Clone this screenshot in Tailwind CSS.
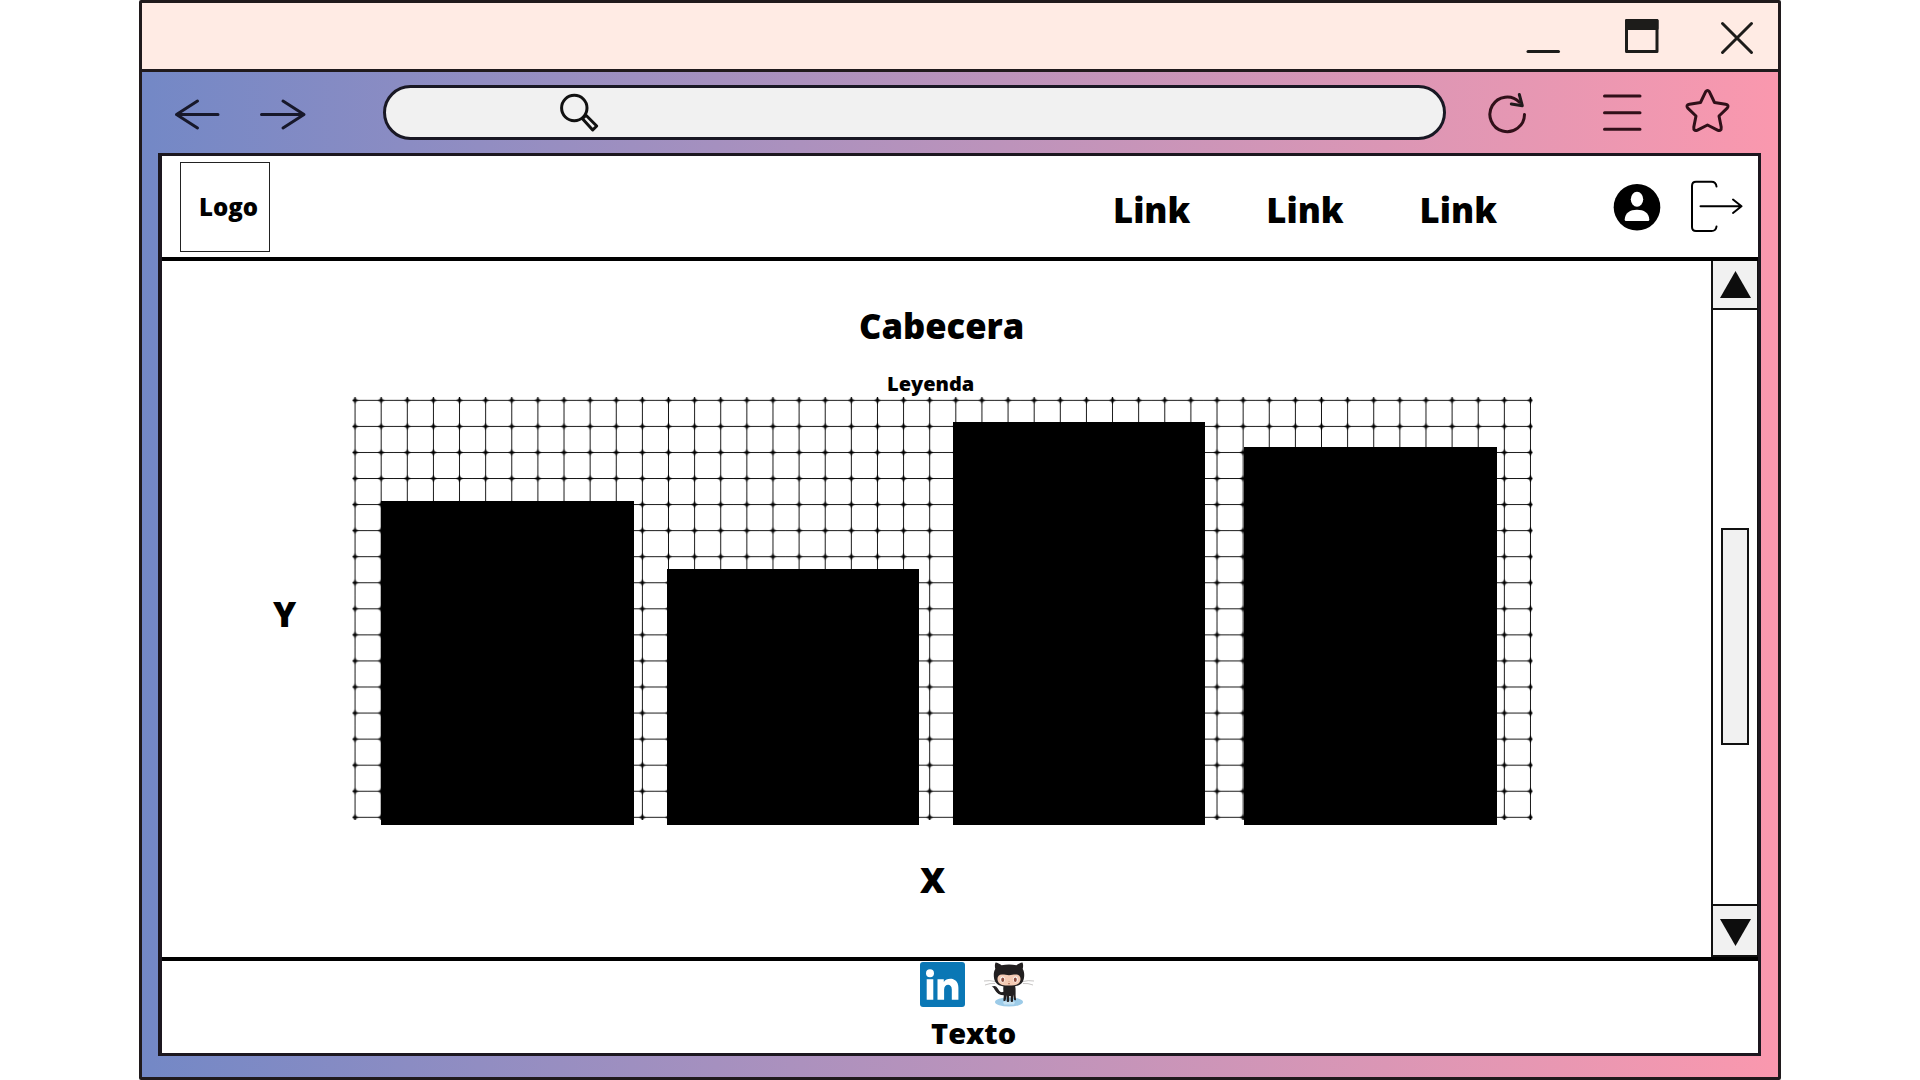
<!DOCTYPE html>
<html lang="es">
<head>
<meta charset="utf-8">
<title>Cabecera</title>
<script src="https://cdn.jsdelivr.net/npm/@tailwindcss/browser@4"></script>
</head>
<body class="bg-white w-[1920px] h-[1080px] overflow-hidden font-['Open_Sans',sans-serif] font-extrabold text-black">
<div class="ml-[139px] w-[1642px] h-[1080px] border-3 border-[#201a1c] rounded-[2px] flex flex-col bg-linear-to-r from-[#7388c6] to-[#fa98ae]">
  <!-- title bar -->
  <div class="h-[69px] shrink-0 bg-[#ffebe4] border-b-3 border-[#201a1c] flex justify-end">
    <svg class="w-[278px] h-[66px]" viewBox="1500 3 278 66" fill="none" stroke="#1d1c1a" stroke-width="3" stroke-linecap="round" stroke-linejoin="round">
      <path d="M1528 51.5h30.5"/>
      <path d="M1626.500 20.500h30.500v31h-30.500z"/>
      <path d="M1626.500 20.500h30.500v8h-30.500z" fill="#1d1c1a"/>
      <path d="M1722.500 23.500l29 29M1751.500 23.500l-29 29"/>
    </svg>
  </div>
  <!-- toolbar -->
  <div class="h-[81px] shrink-0 flex items-start">
    <svg class="w-[241px] h-[81px] shrink-0" viewBox="142 72 241 81" fill="none" stroke="#17182a" stroke-width="3" stroke-linecap="round" stroke-linejoin="round">
      <path d="M218 114.500h-41.500M197.500 101l-21 13.500l21 13.500"/>
      <path d="M261.500 114.500h42M283 101l21 13.500l-21 13.500"/>
    </svg>
    <div class="mt-[13px] w-[1063px] h-[55px] shrink-0 rounded-full border-3 border-[#191824] bg-[#f1f1f1] flex">
      <svg class="ml-[170px] w-[50px] h-[49px]" viewBox="556 88 50 49" fill="none" stroke="#111" stroke-width="3">
        <circle cx="574.300" cy="108" r="12.700"/>
        <path d="M582.500 118.800l3.500-3.500l10.700 10.700l-4 4z" stroke-linejoin="round"/>
      </svg>
    </div>
    <svg class="w-[332px] h-[81px] shrink-0" viewBox="1446 72 332 81" fill="none" stroke="#301019" stroke-width="3" stroke-linecap="round" stroke-linejoin="round">
      <path d="M1524.500 114.500A17.300 17.300 0 1 1 1519.500 102.200"/>
      <path d="M1519.300 94.500l3 11.200l-11-1.700" stroke="#201a1c"/>
      <path d="M1604.500 96h35.500M1604.500 112.700h35.500M1604.500 129.300h35.500"/>
      <path d="M1705.700 91.600Q1707.500 89.200 1709.300 91.600L1714.500 102.500L1725.500 104.200Q1729.500 105 1727.200 108.200L1719 116L1721.200 127Q1721.500 131.500 1718 130.300L1707.500 125L1697 130.300Q1693.500 131.500 1693.800 127L1696 116L1687.800 108.200Q1685.500 105 1689.500 104.200L1700.500 102.500Z"/>
    </svg>
  </div>
  <!-- page -->
  <div class="ml-4 w-[1603px] h-[903px] shrink-0 border-3 border-l-4 border-[#1c171f] bg-white flex flex-col">
    <header class="h-[105px] shrink-0 border-b-4 border-black flex items-start">
      <div class="ml-[18px] mt-[6px] w-[90px] h-[90px] border border-[#222] flex items-center pl-[18px]">
        <span class="text-[24px] leading-[90px]">Logo</span>
      </div>
      <nav class="ml-[843px] mt-[34px] flex text-[34.600px] leading-[40px]">
        <a class="w-[153.300px]">Link</a><a class="w-[153.300px]">Link</a><a class="w-[153.300px]">Link</a>
      </nav>
      <svg class="ml-auto w-[158px] h-[100px] shrink-0" viewBox="1600 156 158 100" fill="none">
        <circle cx="1637" cy="207.200" r="23.300" fill="#000"/>
        <ellipse cx="1637" cy="199.300" rx="6.200" ry="7.500" fill="#fff"/>
        <path d="M1624.700 219.500C1625 213 1630 209.800 1637 209.800S1649 213 1649.300 219.500Q1649.300 221 1648 221H1626Q1624.700 221 1624.700 219.500Z" fill="#fff"/>
        <path d="M1716.500 186.500Q1716 181.700 1711.500 181.700H1696Q1692 181.700 1692 186V227Q1692 231 1696 231H1711.500Q1716 231 1716.500 226.500M1700.500 206.300H1741.500M1733 199.500L1741.500 206.300L1733 213" stroke="#000" stroke-width="2" stroke-linecap="round" stroke-linejoin="round"/>
      </svg>
    </header>
    <main class="h-[696px] shrink-0 flex">
      <section class="w-[1549px] shrink-0 flex flex-col">
        <h1 class="mt-[45px] ml-[697px] text-[34.600px] leading-[40px]">Cabecera</h1>
        <p class="mt-[26px] ml-[725px] text-[20px] leading-[24px]">Leyenda</p>
        <div class="-mt-px flex h-[430px]">
          <div class="w-[190px] shrink-0 pl-[111px] pt-[199px] text-[35px] leading-[40px]">Y</div>
          <div class="w-[1184px] h-[430px] grid">
            <svg class="col-start-1 row-start-1 w-[1184px] h-[430px]" viewBox="0 0 1184 430">
              <defs>
                <pattern id="mesh" x="-10" y="-7.700" width="26.120" height="26.060" patternUnits="userSpaceOnUse">
                  <path d="M0 13.060H26.120M13.060 0V26.060" stroke="#000" stroke-width=".9"/>
                  <path d="M13.060 9.500L14 12L16.500 13.060L14 14.100L13.060 16.600L12.100 14.100L9.600 13.060L12.100 12Z" stroke="#000" stroke-width=".5"/>
                </pattern>
              </defs>
              <rect x="0.500" y="2" width="1180" height="423" fill="url(#mesh)"/>
            </svg>
            <div class="col-start-1 row-start-1 flex items-end pl-[29px] h-[430px]">
              <div class="w-[253px] h-[324px] bg-black"></div>
              <div class="ml-[33px] w-[252px] h-[256px] bg-black"></div>
              <div class="ml-[34px] w-[252px] h-[403px] bg-black"></div>
              <div class="ml-[39px] w-[253px] h-[378px] bg-black"></div>
            </div>
          </div>
        </div>
        <p class="mt-[35px] ml-[758px] text-[35px] leading-[40px]">X</p>
      </section>
      <aside class="w-[47px] shrink-0 border-l-2 border-r border-[#111] flex flex-col items-center">
        <div class="w-full h-[49px] bg-[#f1f1f1] border-b-2 border-[#111] flex justify-center pt-[10px]">
          <svg class="w-[31px] h-[27px]" viewBox="0 0 31 27"><path d="M15.500 0L31 27H0z" fill="#0d0d0d"/></svg>
        </div>
        <div class="mt-[218px] w-[28px] h-[217px] bg-[#f1f1f1] border-2 border-[#111]"></div>
        <div class="mt-auto w-full h-[53px] bg-[#f1f1f1] border-y-2 border-[#111] flex justify-center pt-[13px]">
          <svg class="w-[31px] h-[27px]" viewBox="0 0 31 27"><path d="M15.500 27L31 0H0z" fill="#0d0d0d"/></svg>
        </div>
      </aside>
    </main>
    <footer class="flex-1 border-t-4 border-black">
      <div class="ml-[758px] mt-px flex">
        <svg class="w-[45px] h-[45px]" viewBox="0 0 45 45">
          <rect width="45" height="45" rx="3" fill="#0a77b5"/>
          <circle cx="10" cy="11.300" r="4" fill="#fff"/>
          <path d="M6.700 17.300h6.600v20.500H6.700zM17.500 17.300h6.300v2.800c3-5 14.600-5 14.600 5.700v12h-6.600V27.500c0-6.500-7.700-6-7.700 0v10.300h-6.600z" fill="#fff"/>
        </svg>
        <svg class="ml-[18px] w-[52px] h-[45px]" viewBox="983 962 52 45">
          <ellipse cx="1009" cy="1002" rx="14" ry="4.500" fill="#9ccbe8"/>
          <path d="M1003 1002q6-3 12 0l-1 2.500h-10z" fill="#c6e2f2"/>
          <path d="M1004.500 992C1000 994.500 998.500 991 997 988.500C996 986.800 994.500 986.500 993.300 986.800C996 988.500 995.500 994.500 1004 994.500" fill="#221f20" stroke="#221f20" stroke-width="1.300"/>
          <path d="M1003.500 985h11.500c1.300 5 0 9.500 1 14.500c.3 1.200-1.800 1-2 0l-1-5v6.500c0 1.300-2.300 1.300-2.300 0v-5h-1.500v5c0 1.300-2.500 1.300-2.500 0v-6l-1 5c-.3 1.300-2.700 1.300-2.300-.3c1.200-4.700-.9-9.700.1-14.700z" fill="#221f20"/>
          <path d="M995.500 962.500c2 0 4.500 1.500 6 2.700c5-1 10-1 15 0c1.500-1.200 4-2.700 6-2.700c1 2.500 .6 4.500 .2 6.500c2.200 3.300 1.800 9 .2 12.500c-2.500 4.700-8 5-13.900 5s-11.400-.3-13.900-5c-1.600-3.500-2-9.200 .2-12.500c-.4-2-.8-4 .2-6.500z" fill="#221f20"/>
          <path d="M1002 974.500c3 0 4.500.7 7 .7s4-.7 7-.7c4 0 5.700 4 3.700 7.500c-1.500 3-5.700 3.500-10.700 3.500s-9.200-.5-10.700-3.500c-2-3.500-.3-7.500 3.700-7.500z" fill="#f5cbb4"/>
          <g fill="#fff"><ellipse cx="1002.500" cy="979.500" rx="2.200" ry="3"/><ellipse cx="1015.500" cy="979.500" rx="2.200" ry="3"/></g>
          <g fill="#8e4c3d"><ellipse cx="1002.700" cy="979.700" rx="1.500" ry="2.200"/><ellipse cx="1015.300" cy="979.700" rx="1.500" ry="2.200"/></g>
          <path d="M1008 983.500q1 .8 2 0M1009 981.500v.5" stroke="#a5593f" stroke-width=".8" fill="none"/>
          <path d="M995 981.500q-5-1.500-11-.5M995 983.500q-5-.5-10 1.500M1023 981.500q5-1.500 11-.5M1023 983.500q5-.5 10 1.500" stroke="#b9b6b5" stroke-width=".8" fill="none"/>
        </svg>
      </div>
      <p class="ml-[769px] mt-[7px] text-[29px] leading-[38px]">Texto</p>
    </footer>
  </div>
</div>
</body>
</html>
